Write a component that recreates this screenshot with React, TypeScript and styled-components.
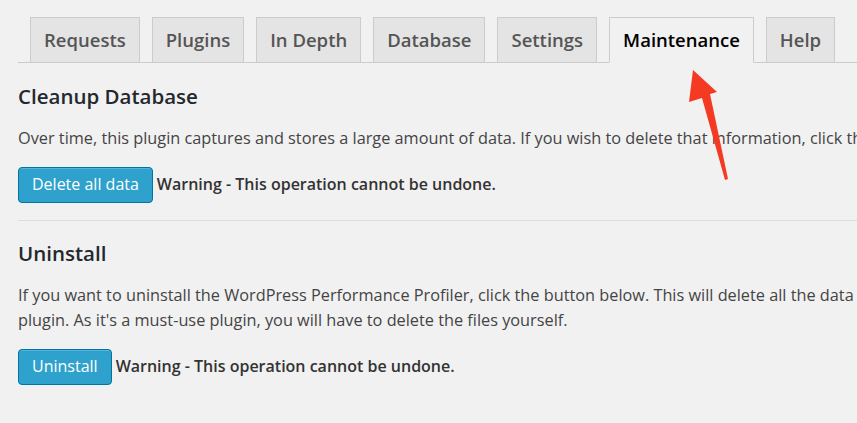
import React from "react";
import styled, { createGlobalStyle } from "styled-components";

const GlobalStyle = createGlobalStyle`
  html, body {
    margin: 0;
    padding: 0;
    background: #f1f1f1;
    overflow: hidden;
  }
  body {
    font-family: "Open Sans", "Noto Sans", sans-serif;
    color: #444;
  }
`;

const Page = styled.div`
  position: relative;
  width: 1100px;
  height: 423px;
  padding: 17px 0 0 18px;
  box-sizing: border-box;
`;

const TabBar = styled.nav`
  display: flex;
  align-items: flex-end;
  gap: 12px;
  padding-left: 12px;
  border-bottom: 1px solid #ccc;
  height: 45px;
`;

const Tab = styled.a<{ $active?: boolean }>`
  display: flex;
  align-items: center;
  box-sizing: border-box;
  height: ${(p) => (p.$active ? "46px" : "45px")};
  margin-bottom: ${(p) => (p.$active ? "-1px" : "0")};
  padding: 0 13px 2px;
  border: 1px solid #ccc;
  border-bottom: ${(p) => (p.$active ? "1px solid #f1f1f1" : "none")};
  background: ${(p) => (p.$active ? "#f1f1f1" : "#e4e4e4")};
  color: ${(p) => (p.$active ? "#000" : "#555")};
  font-size: 18.5px;
  font-weight: 600;
  text-decoration: none;
  white-space: nowrap;
`;

const Heading = styled.h3<{ $top: number }>`
  margin: ${(p) => p.$top}px 0 0;
  font-size: 20.5px;
  line-height: 30px;
  font-weight: 600;
  color: #23282d;
`;

const Section = styled.section`
  display: flex;
  flex-direction: column;
`;

const Text = styled.p`
  margin: 15px 0 0;
  font-size: 16.3px;
  line-height: 25px;
  color: #444;
  white-space: nowrap;
`;

const ActionRow = styled.div<{ $top?: number }>`
  display: flex;
  align-items: center;
  gap: 4px;
  margin-top: ${(p) => p.$top ?? 16}px;
`;

const PrimaryButton = styled.button`
  height: 36px;
  padding: 0 13px 3px;
  border: 1px solid #0074a2;
  border-radius: 4px;
  background: #2ea2cc;
  box-shadow: inset 0 1px 0 rgba(120, 200, 230, 0.5);
  color: #fff;
  font-family: inherit;
  font-size: 16px;
  cursor: pointer;
`;

const Warning = styled.strong`
  font-size: 16px;
  font-weight: 600;
  color: #333;
  padding-bottom: 2px;
`;

const Divider = styled.hr`
  margin: 17px 0 0;
  border: none;
  border-top: 1px solid #ddd;
`;

const Arrow = styled.svg`
  position: absolute;
  left: 682px;
  top: 64px;
`;

const tabs = ["Requests", "Plugins", "In Depth", "Database", "Settings", "Maintenance", "Help"];

const App = () => {
  return (
    <Page>
      <GlobalStyle />
      <TabBar>
        {tabs.map((t) => (
          <Tab key={t} $active={t === "Maintenance"}>
            {t}
          </Tab>
        ))}
      </TabBar>

      <Section>
        <Heading $top={18}>Cleanup Database</Heading>
        <Text>
          Over time, this plugin captures and stores a large amount of data. If you wish to delete that information, click the button below.
        </Text>
        <ActionRow>
          <PrimaryButton>Delete all data</PrimaryButton>
          <Warning>Warning - This operation cannot be undone.</Warning>
        </ActionRow>
      </Section>

      <Divider />

      <Section>
        <Heading $top={17}>Uninstall</Heading>
        <Text>
          If you want to uninstall the WordPress Performance Profiler, click the button below. This will delete all the data stored by this
          <br />
          plugin. As it's a must-use plugin, you will have to delete the files yourself.
        </Text>
        <ActionRow $top={16}>
          <PrimaryButton>Uninstall</PrimaryButton>
          <Warning>Warning - This operation cannot be undone.</Warning>
        </ActionRow>
      </Section>

      <Arrow width="60" height="125" viewBox="0 0 60 125">
        <path d="M11 6 L35 28 L28 30 L46 115 L43 116 L20 34 L7 38 Z" fill="#f43a22" />
      </Arrow>
    </Page>
  );
};

export default App;
